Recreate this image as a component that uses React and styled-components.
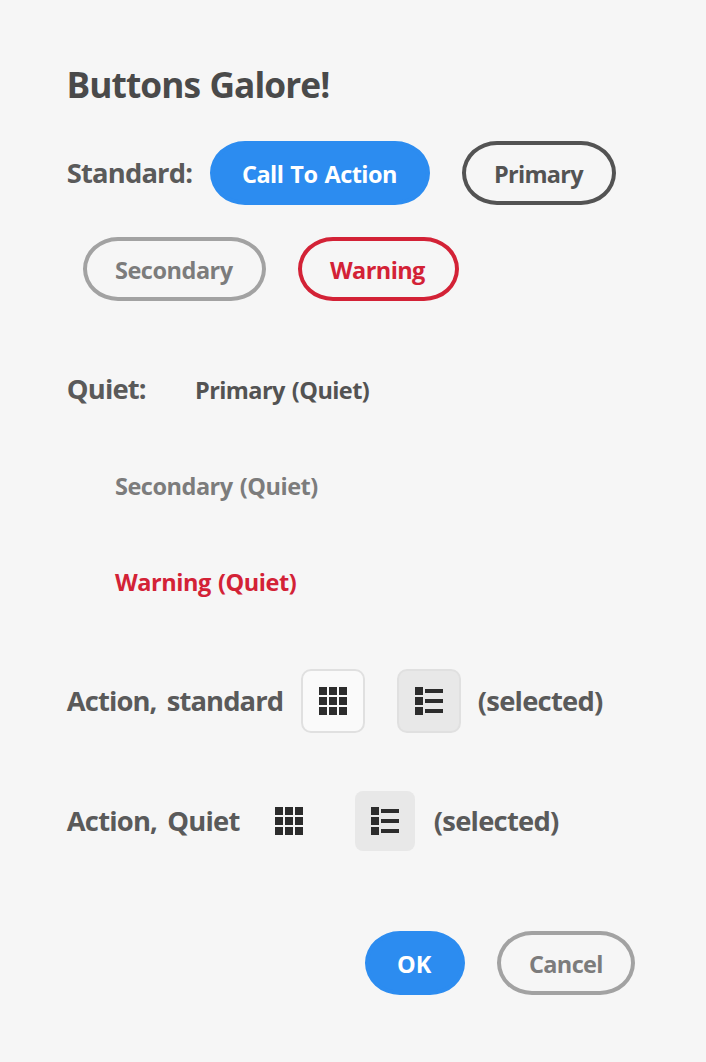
import React from "react";
import styled, { createGlobalStyle, css } from "styled-components";

const GlobalStyle = createGlobalStyle`
  *, *::before, *::after { box-sizing: border-box; }
  body {
    margin: 0;
    background: #f6f6f6;
    font-family: "Open Sans", "Noto Sans", sans-serif;
    font-weight: 690;
  }
`;

const Dialog = styled.main`
  width: 706px;
  min-height: 1062px;
  padding: 61px 71px 67px 66px;
  display: flex;
  flex-direction: column;
`;

const Title = styled.h1`
  margin: 0 0 32px;
  padding-left: 0.5px;
  height: 48px;
  font-size: 35.3px;
  font-weight: 690;
  line-height: 47px;
  letter-spacing: -0.93px;
  word-spacing: 1px;
  color: #4a4a4a;
`;

const Row = styled.div`
  display: flex;
  align-items: center;
  height: 64px;
  gap: 32px;
  margin-bottom: ${(p) => p.$after ?? 32}px;
  padding-left: ${(p) => (p.$indent ? 17 : 0)}px;
`;

const Footer = styled(Row)`
  justify-content: flex-end;
  margin: auto 0 0;
`;

const Label = styled.span`
  flex: none;
  width: ${(p) => p.$width}px;
  margin-right: ${(p) => (p.$width ? -32 : 0)}px;
  padding-left: 0.8px;
  font-size: 27.4px;
  line-height: 38px;
  white-space: pre;
  letter-spacing: ${(p) => p.$tracking}px;
  word-spacing: 4px;
  color: #5a5a5a;
`;

const Trailing = styled(Label)`
  margin: 0 0 0 ${(p) => p.$shift}px;
  width: auto;
`;

const variants = {
  cta: css`
    color: #fff;
    border-color: #2c8cf0;
    background: #2c8cf0;
  `,
  primary: css`
    color: #535353;
    border-color: #535353;
  `,
  secondary: css`
    color: #7c7c7c;
    border-color: #a2a2a2;
  `,
  warning: css`
    color: #d32236;
    border-color: #d32236;
  `,
};

const Button = styled.button`
  flex: none;
  width: ${(p) => p.$width}px;
  height: 64px;
  padding: 2px 0 0 28px;
  border: 4px solid;
  border-radius: 35px / 32px;
  background: transparent;
  font: inherit;
  font-size: 23.5px;
  line-height: 32px;
  letter-spacing: ${(p) => p.$tracking ?? 0}px;
  word-spacing: 1.5px;
  text-align: left;
  white-space: nowrap;
  ${(p) => variants[p.$variant]}
  ${(p) => p.$quiet && "border-color: transparent;"}
`;

const ActionButton = styled.button`
  flex: none;
  display: grid;
  place-items: center;
  width: 64px;
  height: 64px;
  padding: 0;
  border: 2px solid #e0e0e0;
  border-radius: 10px;
  color: #2c2c2c;
  background: ${(p) => (p.$selected ? "#e8e8e8" : "#fafafa")};
  ${(p) =>
    p.$quiet &&
    css`
      width: 60px;
      height: 60px;
      border: 0;
      border-radius: 8px;
      margin-right: 4px;
      background: ${p.$selected ? "#e8e8e8" : "transparent"};
    `}
`;

const Icon = styled.svg`
  display: block;
  width: 28px;
  height: 28px;
  fill: currentColor;
`;

const steps = [0, 10, 20];

const GridIcon = () => (
  <Icon viewBox="0 0 28 28">
    {steps.map((y) =>
      steps.map((x) => <rect key={`${x}-${y}`} x={x} y={y} width="8" height="8" />)
    )}
  </Icon>
);

const ListIcon = () => (
  <Icon viewBox="0 0 28 28">
    {steps.map((y) => (
      <React.Fragment key={y}>
        <rect x="0" y={y} width="8" height="8" />
        <rect x="10" y={y + 2} width="18" height="4" />
      </React.Fragment>
    ))}
  </Icon>
);

export default function App() {
  return (
    <>
      <GlobalStyle />
      <Dialog>
        <Title>Buttons Galore!</Title>
        <Row>
          <Label $width={144} $tracking={-0.85}>Standard:</Label>
          <Button $variant="cta" $width={220} $tracking={-0.55}>Call To Action</Button>
          <Button $variant="primary" $width={154} $tracking={-0.7}>Primary</Button>
        </Row>
        <Row $indent $after={56}>
          <Button $variant="secondary" $width={183} $tracking={-0.48}>Secondary</Button>
          <Button $variant="warning" $width={161} $tracking={-0.6}>Warning</Button>
        </Row>
        <Row>
          <Label $width={97} $tracking={-0.85}>Quiet:</Label>
          <Button $variant="primary" $quiet $width={239} $tracking={-0.58}>Primary (Quiet)</Button>
        </Row>
        <Row $indent>
          <Button $variant="secondary" $quiet $width={268} $tracking={-0.48}>Secondary (Quiet)</Button>
        </Row>
        <Row $indent $after={56}>
          <Button $variant="warning" $quiet $width={247} $tracking={-0.44}>Warning (Quiet)</Button>
        </Row>
        <Row $after={56}>
          <Label $width={235} $tracking={-0.9}>Action, standard</Label>
          <ActionButton aria-label="Grid view"><GridIcon /></ActionButton>
          <ActionButton $selected aria-label="List view"><ListIcon /></ActionButton>
          <Trailing $shift={-16} $tracking={-0.76}>(selected)</Trailing>
        </Row>
        <Row>
          <Label $width={193} $tracking={-0.82}>Action, Quiet</Label>
          <ActionButton $quiet aria-label="Grid view"><GridIcon /></ActionButton>
          <ActionButton $quiet $selected aria-label="List view"><ListIcon /></ActionButton>
          <Trailing $shift={-18} $tracking={-0.76}>(selected)</Trailing>
        </Row>
        <Footer>
          <Button $variant="cta" $width={100}>OK</Button>
          <Button $variant="secondary" $width={138} $tracking={-0.65}>Cancel</Button>
        </Footer>
      </Dialog>
    </>
  );
}
